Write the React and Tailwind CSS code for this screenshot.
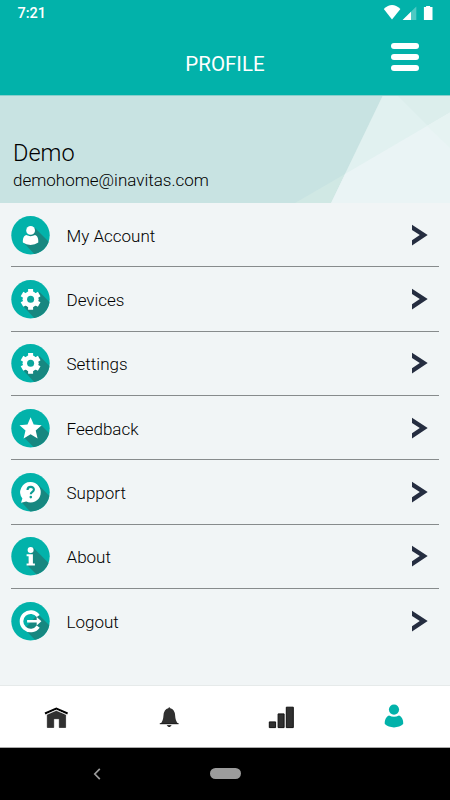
import React from 'react';

const GEAR =
  'M17.5 9.8h5v2.8l2.300 1.300 2.500-1.400 2.600 4.500-2.400 1.400v3.200l2.400 1.400-2.600 4.500-2.500-1.400-2.300 1.300v3.100h-5v-3.100l-2.300-1.300-2.500 1.400-2.600-4.500 2.400-1.400v-3.200l-2.400-1.400 2.600-4.500 2.500 1.400 2.300-1.300z';

const UserGlyph = () => (
  <g fill="#fff">
    <circle cx="20" cy="15.1" r="4.4" />
    <path d="M15.500 19.800Q20 22 24.500 19.800C27 20.600 28 24 27.700 27.200Q24.500 29.600 20 29.600T12.300 27.200C12 24 13 20.600 15.500 19.800z" />
  </g>
);

const GearGlyph = () => (
  <>
    <path d={GEAR} fill="#fff" />
    <circle cx="20" cy="20" r="8" fill="#fff" />
    <circle cx="20" cy="20" r="3.5" fill="#0ba69d" />
  </>
);

const StarGlyph = () => (
  <path d="M20 9l3.100 7.300 8 .7-6 5.200 1.900 8-7-4.300-7 4.300 1.900-8-6-5.200 8-.7z" fill="#fff" />
);

const HelpGlyph = () => (
  <>
    <path d="M20 9.800a10.200 10.200 0 1 1-4.400 19.400l-5.200 1.200 1.400-4.100A10.200 10.200 0 0 1 20 9.800z" fill="#fff" />
    <path d="M16.900 17.800c0-4.300 6.600-4.100 6.400-.5-.1 2.300-3.100 2.300-3.100 4.700" fill="none" stroke="#0c9c94" strokeWidth="2.100" />
    <circle cx="20.200" cy="24.800" r="1.300" fill="#0c9c94" />
  </>
);

const InfoGlyph = () => (
  <g fill="#fff">
    <circle cx="20" cy="13.600" r="3" />
    <path d="M16 18h6.300v9.200h2v2h-8.300v-2h2v-7.200h-2z" />
  </g>
);

const LogoutGlyph = () => (
  <>
    <path d="M27.600 14.700a9.200 9.200 0 1 0 0 10.600" fill="none" stroke="#fff" strokeWidth="3.600" />
    <path d="M16.500 18.700h9.600v-3l4.700 4.300-4.700 4.300v-3h-9.600z" fill="#fff" />
  </>
);

const ITEMS = [
  { id: 'account', label: 'My Account', Glyph: UserGlyph, shadow: 'M23.500 12.500L42 31V42H26L13 28z' },
  { id: 'devices', label: 'Devices', Glyph: GearGlyph, shadow: 'M28.500 13L42 26.500V42H26L12 27z' },
  { id: 'settings', label: 'Settings', Glyph: GearGlyph, shadow: 'M28.500 13L42 26.500V42H26L12 27z' },
  { id: 'feedback', label: 'Feedback', Glyph: StarGlyph, shadow: 'M30.500 17.500L42 29V42H25.500L13.500 30z' },
  { id: 'support', label: 'Support', Glyph: HelpGlyph, shadow: 'M27 12.600L42 27.600V42H21.500L10.500 30.300z' },
  { id: 'about', label: 'About', Glyph: InfoGlyph, shadow: 'M22.200 11.600L42 31.400V42H29L16 29z' },
  { id: 'logout', label: 'Logout', Glyph: LogoutGlyph, shadow: 'M27 13L42 28V42H27L13.500 28z' },
];

function StatusBar() {
  return (
    <div className="flex h-[27px] items-center justify-between pl-[17.5px] pr-[16px]">
      <span className="pt-[2px] text-[14.5px] font-medium leading-none text-white">7:21</span>
      <svg className="h-[27px] w-[52px]" viewBox="0 0 52 27" fill="#fff">
        <path d="M1.800 8.300Q10-.1 18.400 8.300L10 19.500z" transform="translate(0 1.200) scale(1 .94)" />
        <path d="M20.600 20L34.300 6.500V20z" opacity=".3" />
        <path d="M20.600 20L29 11.700V20z" />
        <path d="M42.400 7h1.700V5.900h4V7h2.400v13h-8.600V7z" />
      </svg>
    </div>
  );
}

function Header() {
  return (
    <header className="h-[95px] shrink-0 bg-[#02b2aa]">
      <StatusBar />
      <div className="grid h-[68px] grid-cols-[1fr_auto_1fr]">
        <h1 className="col-start-2 pt-[25px] text-[20.5px] leading-6 text-white">PROFILE</h1>
        <button className="flex flex-col gap-[5px] justify-self-end pr-[31px] pt-[16px]" aria-label="Menu">
          <span className="h-[6px] w-[28px] rounded-full bg-white" />
          <span className="h-[6px] w-[28px] rounded-full bg-white" />
          <span className="h-[6px] w-[28px] rounded-full bg-white" />
        </button>
      </div>
    </header>
  );
}

function ProfileBanner() {
  return (
    <section className="relative h-[108px] shrink-0 overflow-hidden bg-[#c8e3e2]">
      <svg className="absolute inset-0 h-full w-full" viewBox="0 0 450 108">
        <path d="M383 0H450V108H331z" fill="#e1f1f0" />
        <path d="M397 0H450V53z" fill="#dceeec" />
        <path d="M295 108L345 79 331 108z" fill="#d0e8e4" />
        <path d="M345 79L450 17.500V108H331z" fill="#eaf4f5" />
        <path d="M427 31L450 17.500V53z" fill="#e6f3f2" />
        <path d="M0 .5H450" stroke="#89cfcc" />
      </svg>
      <div className="relative pl-[13px] pt-[43px] text-black">
        <p className="text-[23.5px] font-light leading-[31px]">Demo</p>
        <p className="text-[17px] font-light leading-[22px]">demohome@inavitas.com</p>
      </div>
    </section>
  );
}

function MenuItem({ id, label, Glyph, shadow, last }) {
  return (
    <li className={`flex h-[64.33px] items-center ${last ? '' : 'border-b border-[#878b8c]'}`}>
      <svg className="h-10 w-10 shrink-0" viewBox="0 0 40 40">
        <defs>
          <clipPath id={`disc-${id}`}>
            <circle cx="19.500" cy="20.300" r="19.200" />
          </clipPath>
        </defs>
        <circle cx="19.500" cy="20.300" r="19.200" fill="#02b2aa" />
        <g clipPath={`url(#disc-${id})`}>
          <path d={shadow} fill="#178780" />
        </g>
        <g transform="translate(-.4 .3)">
          <Glyph />
        </g>
      </svg>
      <span className="ml-[15.5px] flex-1 pt-[2px] text-[17px] font-light leading-6 text-black">{label}</span>
      <svg className="mr-[11.5px] h-[22px] w-4" viewBox="0 0 16 22">
        <path d="M0 .8L15.700 11.100 0 21.400V16.200L7.800 11.100 0 6z" fill="#252d40" />
      </svg>
    </li>
  );
}

function TabBar() {
  return (
    <nav className="grid h-[62px] shrink-0 grid-cols-4 place-items-center border-t border-[#e6eaea] bg-white">
      <svg className="h-8 w-8" viewBox="0 0 32 32">
        <path d="M5 12.500L16.300 7.500 27.600 12.500" fill="none" stroke="#000" strokeWidth="2" />
        <path d="M7.300 13.800L16.300 9.900l9.300 3.900V26.500H19.300v-8.800h-5.600V26.500H7.300z" fill="#303030" stroke="#111" strokeWidth=".6" />
        <path d="M5.500 14L16.300 9.200l10.800 4.800" fill="none" stroke="#ddd" strokeWidth=".8" />
      </svg>
      <svg className="h-8 w-8" viewBox="0 0 32 32">
        <path d="M15.300 7.200q1-2 2 0 4.300 1 4.800 7 .3 6 3 8.500H7.500q2.700-2.500 3-8.500 .5-6 4.800-7z" fill="#303030" />
        <path d="M6.800 22.700h18.800" stroke="#111" />
        <path d="M13.700 24.200h5q-2.500 3.400-5 0z" fill="#000" />
      </svg>
      <svg className="h-8 w-8" viewBox="0 0 32 32" fill="#303030" stroke="#111">
        <path d="M4.300 20.900h6.300v5.700h-6.300zM13.100 12.900h6v13.700h-6zM21.300 6.200h7v20.400h-7z" />
      </svg>
      <svg className="h-8 w-8" viewBox="0 0 32 32" fill="#02b2aa">
        <circle cx="16" cy="8.600" r="5.100" />
        <path d="M11 14.400Q16 16.900 21 14.400C24 15.600 25.500 19.100 25.200 23.100Q21.500 26.400 16 26.400T6.800 23.100C6.500 19.100 8 15.600 11 14.400z" />
      </svg>
    </nav>
  );
}

function SystemBar() {
  return (
    <div className="grid h-[53px] shrink-0 grid-cols-[1fr_auto_1fr] items-center border-t border-[#aaaaaa] bg-black">
      <svg className="ml-[93px] h-3 w-2" viewBox="0 0 8 12">
        <path d="M6.800 .8L1.800 6l5 5.200" fill="none" stroke="#9b9b9b" strokeWidth="1.700" />
      </svg>
      <span className="mb-px h-[11px] w-[31px] rounded-full bg-[#9c9c9c]" />
    </div>
  );
}

export default function App() {
  return (
    <div className="flex h-[800px] w-[450px] flex-col overflow-hidden bg-[#f1f5f6] font-['Roboto',sans-serif]">
      <Header />
      <ProfileBanner />
      <ul className="flex-1 px-[11px]">
        {ITEMS.map((item, i) => (
          <MenuItem key={item.id} {...item} last={i === ITEMS.length - 1} />
        ))}
      </ul>
      <TabBar />
      <SystemBar />
    </div>
  );
}
